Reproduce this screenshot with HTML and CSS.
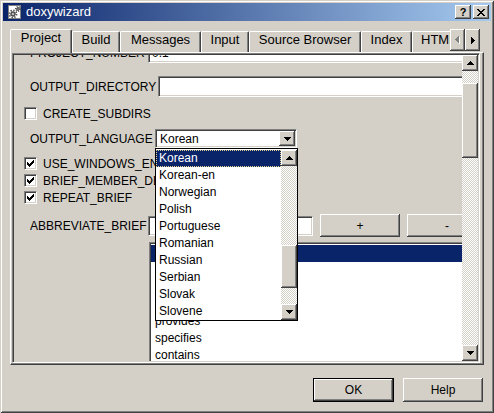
FILE: index.html
```html
<!DOCTYPE html>
<html>
<head>
<meta charset="utf-8">
<title>doxywizard</title>
<link rel="stylesheet" href="styles.css">
</head>
<body>
<div class="window">
  <div class="titlebar">
    <svg class="appicon" viewBox="0 0 16 16" width="16" height="16">
      <rect x="1.5" y="1.5" width="12" height="13" fill="#fff" stroke="#808080"/>
      <circle cx="6" cy="10" r="3.6" fill="none" stroke="#505050" stroke-width="1.6" stroke-dasharray="1.4 1.4"/>
      <circle cx="6" cy="10" r="2.2" fill="#808080" stroke="#303030" stroke-width="1"/>
      <circle cx="6" cy="10" r="0.8" fill="#fff"/>
      <circle cx="11" cy="5" r="2.4" fill="none" stroke="#505050" stroke-width="1.3" stroke-dasharray="1.1 1.1"/>
      <circle cx="11" cy="5" r="1.4" fill="#909090" stroke="#303030" stroke-width="0.8"/>
    </svg>
    <span class="title">doxywizard</span>
    <div class="capbtns">
      <div class="capbtn raised">?</div>
      <div class="capbtn raised">
        <svg width="8" height="7" viewBox="0 0 8 7" shape-rendering="crispEdges"><path d="M0 0h2v1h-2zM6 0h2v1h-2zM1 1h2v1h-2zM5 1h2v1h-2zM2 2h4v1h-4zM3 3h2v1h-2zM2 4h4v1h-4zM1 5h2v1h-2zM5 5h2v1h-2zM0 6h2v1h-2zM6 6h2v1h-2z"/></svg>
      </div>
    </div>
  </div>

  <div class="tabbar">
    <div class="tabs">
      <div class="tab sel t1">Project</div>
      <div class="tab t2">Build</div>
      <div class="tab t3">Messages</div>
      <div class="tab t4">Input</div>
      <div class="tab t5">Source Browser</div>
      <div class="tab t6">Index</div>
      <div class="tab t7">HTML</div>
    </div>
    <div class="tabarrows">
      <div class="arrowbtn raised">
        <svg width="5" height="8" viewBox="0 0 5 8" shape-rendering="crispEdges"><path fill="#fff" d="M4 1h1v7h-1zM3 2h1v5h-1zM2 3h1v3h-1zM1 4h1v1h-1z"/><path fill="#808080" d="M3 0h1v7h-1zM2 1h1v5h-1zM1 2h1v3h-1zM0 3h1v1h-1z"/></svg>
      </div>
      <div class="arrowbtn raised">
        <svg width="4" height="7" viewBox="0 0 4 7" shape-rendering="crispEdges"><path d="M0 0h1v7h-1zM1 1h1v5h-1zM2 2h1v3h-1zM3 3h1v1h-1z"/></svg>
      </div>
    </div>
  </div>

  <div class="panel">
    <div class="scrollview sunken">
      <div class="viewport">
        <div class="content">
          <div class="row frow">
            <span class="lbl w118">PROJECT_NUMBER</span>
            <div class="field sunken grow">0.1</div>
          </div>
          <div class="row frow gap13">
            <span class="lbl w128">OUTPUT_DIRECTORY</span>
            <div class="field sunken grow"></div>
          </div>
          <div class="row crow gap8">
            <span class="check sunken"></span>
            <span class="clbl">CREATE_SUBDIRS</span>
          </div>
          <div class="row lrow gap7">
            <span class="lbl w125">OUTPUT_LANGUAGE</span>
            <div class="combowrap">
              <div class="combo sunken">
                <span class="ctext">Korean</span>
                <span class="dropbtn raised">
                  <svg width="7" height="4" viewBox="0 0 7 4" shape-rendering="crispEdges"><path d="M0 0h7v1h-7zM1 1h5v1h-5zM2 2h3v1h-3zM3 3h1v1h-1z"/></svg>
                </span>
              </div>
              <div class="popup">
                <div class="plist">
                  <div class="pitem sel">Korean</div>
                  <div class="pitem">Korean-en</div>
                  <div class="pitem">Norwegian</div>
                  <div class="pitem">Polish</div>
                  <div class="pitem">Portuguese</div>
                  <div class="pitem">Romanian</div>
                  <div class="pitem">Russian</div>
                  <div class="pitem">Serbian</div>
                  <div class="pitem">Slovak</div>
                  <div class="pitem">Slovene</div>
                </div>
                <div class="sbar pbar">
                  <div class="sbtn raised"><svg width="7" height="4" viewBox="0 0 7 4" shape-rendering="crispEdges"><path d="M3 0h1v1h-1zM2 1h3v1h-3zM1 2h5v1h-5zM0 3h7v1h-7z"/></svg></div>
                  <div class="track ptrack1"></div>
                  <div class="thumb raised pthumb"></div>
                  <div class="track grow"></div>
                  <div class="sbtn raised"><svg width="7" height="4" viewBox="0 0 7 4" shape-rendering="crispEdges"><path d="M0 0h7v1h-7zM1 1h5v1h-5zM2 2h3v1h-3zM3 3h1v1h-1z"/></svg></div>
                </div>
              </div>
            </div>
          </div>
          <div class="row crow gap7">
            <span class="check sunken on"><svg width="7" height="7" viewBox="0 0 7 7" shape-rendering="crispEdges"><path d="M6 0h1v1h-1zM5 1h2v1h-2zM0 2h1v1h-1zM4 2h3v1h-3zM0 3h2v1h-2zM3 3h3v1h-3zM0 4h5v1h-5zM1 5h3v1h-3zM2 6h1v1h-1z"/></svg></span>
            <span class="clbl">USE_WINDOWS_ENCODING</span>
          </div>
          <div class="row crow">
            <span class="check sunken on"><svg width="7" height="7" viewBox="0 0 7 7" shape-rendering="crispEdges"><path d="M6 0h1v1h-1zM5 1h2v1h-2zM0 2h1v1h-1zM4 2h3v1h-3zM0 3h2v1h-2zM3 3h3v1h-3zM0 4h5v1h-5zM1 5h3v1h-3zM2 6h1v1h-1z"/></svg></span>
            <span class="clbl">BRIEF_MEMBER_DESC</span>
          </div>
          <div class="row crow">
            <span class="check sunken on"><svg width="7" height="7" viewBox="0 0 7 7" shape-rendering="crispEdges"><path d="M6 0h1v1h-1zM5 1h2v1h-2zM0 2h1v1h-1zM4 2h3v1h-3zM0 3h2v1h-2zM3 3h3v1h-3zM0 4h5v1h-5zM1 5h3v1h-3zM2 6h1v1h-1z"/></svg></span>
            <span class="clbl">REPEAT_BRIEF</span>
          </div>
          <div class="row brow gap8">
            <span class="lbl w118">ABBREVIATE_BRIEF</span>
            <div class="field sunken abfield"></div>
            <div class="btn raised pm">+</div>
            <div class="btn raised pm">-</div>
          </div>
          <div class="list sunken">
            <div class="litem sel">The $name class</div>
            <div class="litem">The $name widget</div>
            <div class="litem">The $name file</div>
            <div class="litem">is</div>
            <div class="litem">provides</div>
            <div class="litem">specifies</div>
            <div class="litem">contains</div>
            <div class="litem">represents</div>
          </div>
        </div>
      </div>
      <div class="sbar vbar">
        <div class="sbtn raised"><svg width="7" height="4" viewBox="0 0 7 4" shape-rendering="crispEdges"><path d="M3 0h1v1h-1zM2 1h3v1h-3zM1 2h5v1h-5zM0 3h7v1h-7z"/></svg></div>
        <div class="track vtrack1"></div>
        <div class="thumb raised vthumb"></div>
        <div class="track grow"></div>
        <div class="sbtn raised"><svg width="7" height="4" viewBox="0 0 7 4" shape-rendering="crispEdges"><path d="M0 0h7v1h-7zM1 1h5v1h-5zM2 2h3v1h-3zM3 3h1v1h-1z"/></svg></div>
      </div>
    </div>
  </div>

  <div class="buttons">
    <div class="btn raised default">OK</div>
    <div class="btn raised">Help</div>
  </div>
</div>
</body>
</html>
```

FILE: styles.css
```css
* { box-sizing: border-box; }
html, body { margin: 0; padding: 0; }
body {
  width: 494px;
  height: 413px;
  overflow: hidden;
  background: #d4d0c8;
  font-family: "Liberation Sans", Arial, sans-serif;
  font-size: 12px;
  color: #000;
}

.window {
  width: 494px;
  height: 413px;
  padding: 3px;
  background: #d4d0c8;
  box-shadow: inset 1px 1px #d4d0c8, inset -1px -1px #404040, inset 2px 2px #fff, inset -2px -2px #808080;
  display: flex;
  flex-direction: column;
}

/* 3D helpers */
.raised {
  background: #d4d0c8;
  box-shadow: inset -1px -1px #404040, inset 1px 1px #fff, inset -2px -2px #808080;
}
.sunken {
  border: 1px solid;
  border-color: #808080 #fff #fff #808080;
  padding: 1px;
  box-shadow: inset 1px 1px #404040, inset -1px -1px #d4d0c8;
}

/* title bar */
.titlebar {
  flex: none;
  height: 18px;
  display: flex;
  align-items: center;
  padding-left: 4px;
  background: linear-gradient(to right, #0a246a, #a6caf0);
  color: #fff;
}
.appicon { flex: none; display: block; }
.title { margin-left: 3px; font-size: 13px; line-height: 18px; }
.capbtns { margin-left: auto; display: flex; gap: 2px; padding-right: 2px; }
.capbtn {
  width: 16px;
  height: 14px;
  display: flex;
  align-items: center;
  justify-content: center;
  color: #000;
  font-weight: bold;
  font-size: 11px;
  line-height: 14px;
}

/* tabs */
.tabbar {
  flex: none;
  display: flex;
  height: 24px;
  margin-top: 8px;
  margin-left: 7px;
  position: relative;
  z-index: 1;
}
.tabs {
  width: 440px;
  height: 24px;
  overflow: hidden;
  display: flex;
  align-items: flex-start;
}
.tab {
  flex: none;
  height: 21px;
  margin-top: 2px;
  border-top: 1px solid #fff;
  border-left: 1px solid #fff;
  border-right: 1px solid #404040;
  border-radius: 2px 2px 0 0;
  box-shadow: inset -1px 0 #808080;
  text-align: center;
  font-size: 13px;
  line-height: 16px;
  white-space: nowrap;
  overflow: hidden;
}
.tab.sel { height: 24px; margin-top: 0; background: #d4d0c8; }
.t1 { width: 62px; }
.t2 { width: 48px; }
.t3 { width: 81px; }
.t4 { width: 48px; }
.t5 { width: 112px; }
.t6 { width: 51px; }
.t7 { width: 70px; text-align: left; padding-left: 8px; }
.tabarrows { display: flex; }
.arrowbtn {
  width: 15px;
  height: 22px;
  display: flex;
  align-items: center;
  justify-content: center;
}

/* panel */
.panel {
  flex: none;
  margin-top: -1px;
  margin-left: 7px;
  width: 474px;
  height: 313px;
  border: 1px solid;
  border-color: #fff #404040 #404040 #fff;
  box-shadow: inset -1px -1px #808080;
  padding-left: 1px;
}
.scrollview {
  width: 468px;
  height: 310px;
  display: flex;
  background: #d4d0c8;
}
.viewport { flex: 1; overflow: hidden; position: relative; }
.content { width: 473px; margin-top: -13px; }

.row { display: flex; align-items: center; white-space: nowrap; }
.frow { height: 21px; padding-left: 16px; }
.lrow { height: 19px; padding-left: 16px; }
.brow { height: 23px; padding-left: 16px; }
.crow { height: 17px; padding-left: 10px; }
.gap13 { margin-top: 13px; }
.gap8 { margin-top: 8px; }
.gap7 { margin-top: 7px; }

.lbl { flex: none; overflow: hidden; }
.w118 { width: 118px; }
.w125 { width: 125px; }
.w128 { width: 128px; }

.field {
  height: 21px;
  background: #fff;
  display: flex;
  align-items: center;
  padding: 1px 3px;
}
.grow { flex: 1; }
.abfield { width: 165px; height: 20px; flex: none; margin-right: 7px; }

.check {
  width: 13px;
  height: 13px;
  flex: none;
  background: #fff;
  display: flex;
  align-items: center;
  justify-content: center;
}
.check svg { display: block; }
.clbl { margin-left: 6px; }

/* combo */
.combowrap { position: relative; width: 142px; height: 19px; flex: none; }
.combo {
  width: 142px;
  height: 19px;
  background: #fff;
  display: flex;
  align-items: center;
}
.ctext { flex: 1; padding-left: 3px; }
.dropbtn {
  width: 16px;
  height: 15px;
  display: flex;
  align-items: center;
  justify-content: center;
}
.popup {
  position: absolute;
  top: 19px;
  left: 0;
  z-index: 5;
  width: 143px;
  height: 173px;
  border: 1px solid #000;
  background: #fff;
  padding-top: 1px;
  display: flex;
}
.plist { flex: 1; }
.pitem { height: 17px; line-height: 17px; padding-left: 3px; white-space: nowrap; }
.pitem.sel {
  background: #0a246a;
  color: #fff;
  outline: 1px dotted #e6d58c;
  outline-offset: -1px;
}

/* scrollbars */
.sbar { width: 16px; flex: none; display: flex; flex-direction: column; }
.sbtn {
  height: 16px;
  flex: none;
  display: flex;
  align-items: center;
  justify-content: center;
}
.sbtn svg { display: block; }
.track {
  background: repeating-conic-gradient(#d4d0c8 0 25%, #fff 0 50%) 0 0 / 2px 2px;
}
.thumb { flex: none; }
.ptrack1 { height: 79px; flex: none; }
.pthumb { height: 43px; }
.vtrack1 { height: 12px; flex: none; }
.vthumb { height: 75px; }

/* buttons */
.btn {
  width: 80px;
  height: 23px;
  flex: none;
  display: flex;
  align-items: center;
  justify-content: center;
}
.pm + .pm { margin-left: 7px; }

/* list */
.list {
  margin-top: 5px;
  margin-left: 135px;
  height: 140px;
  background: #fff;
  padding: 2px 1px;
  overflow: hidden;
}
.litem { height: 17px; line-height: 17px; padding-left: 4px; white-space: nowrap; }
.litem.sel { background: #0a246a; color: #fff; }

/* dialog buttons */
.buttons {
  flex: none;
  display: flex;
  justify-content: flex-end;
  gap: 9px;
  margin-top: 13px;
  padding-right: 8px;
}
.buttons .btn { height: 24px; }
.btn.default { width: 81px; border: 1px solid #000; }
```
